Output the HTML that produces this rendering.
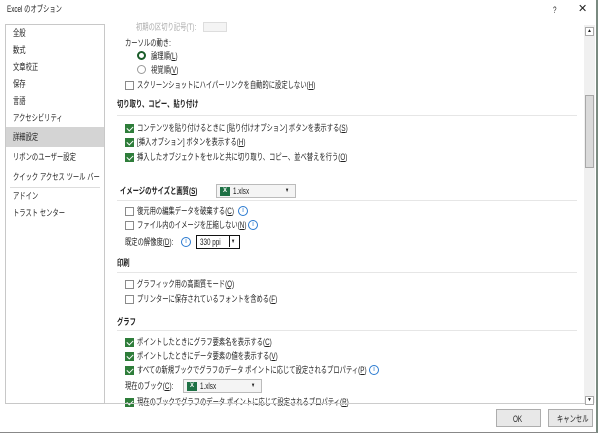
<!DOCTYPE html><html><head><meta charset="utf-8"><style>
*{margin:0;padding:0;box-sizing:border-box}
body{width:600px;height:433px;background:#fff;font-family:"Liberation Sans","Noto Sans CJK JP",sans-serif;font-size:9px;color:#222;position:relative;overflow:hidden}
.a{position:absolute;white-space:nowrap;line-height:12px;transform:scaleX(0.7);transform-origin:0 0}
.win{position:absolute;left:0;top:0;width:598px;height:433px;background:#fff;border-right:2px solid #7a8a80;border-bottom:1px solid #888}
.left{position:absolute;left:5px;top:24px;width:100px;height:380px;border:1px solid #c8c8c8;background:#fff}
.cb{position:absolute;width:9px;height:9px;border:1px solid #8a8a8a;background:#fff}
.cb.on{background:#2e7d3a;border-color:#2e7d3a}
.cb.on:after{content:"";position:absolute;left:2px;top:0px;width:3px;height:5px;border:solid #fff;border-width:0 1.5px 1.5px 0;transform:rotate(45deg)}
.hd{font-weight:bold}
.ln{position:absolute;left:117px;width:460px;height:1px;background:#e6e6e6}
.i{position:absolute;width:10px;height:10px;border:1px solid #2a7ad0;border-radius:50%;color:#2a7ad0;font-size:7px;text-align:center;line-height:8px;background:#fff}
.dd{position:absolute;height:14px;border:1px solid #bbb;background:#f4f4f4}
.xl{position:absolute;left:3px;top:2px;width:10px;height:9px;background:#1e7145;color:#fff;font-size:6px;line-height:9px;text-align:center;font-weight:bold}
.btn{position:absolute;top:409px;height:18px;width:45px;border:1px solid #adadad;background:#e8e8e8}
.btn .a{top:3px}
u{text-decoration:underline}
</style></head><body>
<div class="win"></div>
<div class="a" style="left:7px;top:3px">Excel のオプション</div>
<div class="a" style="left:553px;top:4px">?</div>
<div class="a" style="left:578px;top:3px;font-size:11px;transform:none">✕</div>
<div class="left"></div>
<div style="position:absolute;left:6px;top:127px;width:98px;height:20px;background:#d4d4d4"></div>
<div style="position:absolute;left:10px;top:187px;width:90px;height:1px;background:#ddd"></div>
<div class="a" style="left:13px;top:27px">全般</div>
<div class="a" style="left:13px;top:44px">数式</div>
<div class="a" style="left:13px;top:61px">文章校正</div>
<div class="a" style="left:13px;top:78px">保存</div>
<div class="a" style="left:13px;top:95px">言語</div>
<div class="a" style="left:13px;top:112px">アクセシビリティ</div>
<div class="a" style="left:13px;top:131px">詳細設定</div>
<div class="a" style="left:13px;top:151px">リボンのユーザー設定</div>
<div class="a" style="left:13px;top:171px">クイック アクセス ツール バー</div>
<div class="a" style="left:13px;top:190px">アドイン</div>
<div class="a" style="left:13px;top:207px">トラスト センター</div>
<div style="position:absolute;left:584px;top:25px;width:11px;height:378px;background:#f0f0f0"></div>
<div style="position:absolute;left:585px;top:27px;width:9px;height:9px;border:1px solid #aaa;background:#fff;font-size:5px;text-align:center;line-height:7px">▲</div>
<div style="position:absolute;left:585px;top:95px;width:9px;height:73px;border:1px solid #a8a8a8;background:#dadada"></div>
<div style="position:absolute;left:585px;top:396px;width:9px;height:9px;border:1px solid #aaa;background:#fff;font-size:5px;text-align:center;line-height:7px">▼</div>
<div class="a" style="left:136px;top:21px;color:#aaa">初期の区切り記号(T):</div>
<div style="position:absolute;left:203px;top:22px;width:24px;height:10px;border:1px solid #ddd;background:#f4f4f4"></div>
<div class="a" style="left:125px;top:37px">カーソルの動き:</div>
<div style="position:absolute;left:137px;top:51px;width:9px;height:9px;border:2.5px solid #1a5c2a;border-radius:50%"></div>
<div class="a" style="left:151px;top:50px">論理順(<u>L</u>)</div>
<div style="position:absolute;left:137px;top:65px;width:9px;height:9px;border:1px solid #999;border-radius:50%"></div>
<div class="a" style="left:151px;top:64px">視覚順(<u>V</u>)</div>
<div class="cb" style="left:125px;top:81px"></div><div class="a" style="left:137px;top:79px">スクリーンショットにハイパーリンクを自動的に設定しない(<u>H</u>)</div>
<div class="a hd" style="left:117px;top:98px">切り取り、コピー、貼り付け</div><div class="ln" style="top:115px"></div>
<div class="cb on" style="left:125px;top:124px"></div><div class="a" style="left:137px;top:122px">コンテンツを貼り付けるときに [貼り付けオプション] ボタンを表示する(<u>S</u>)</div>
<div class="cb on" style="left:125px;top:138px"></div><div class="a" style="left:137px;top:136px">[挿入オプション] ボタンを表示する(<u>H</u>)</div>
<div class="cb on" style="left:125px;top:153px"></div><div class="a" style="left:137px;top:151px">挿入したオブジェクトをセルと共に切り取り、コピー、並べ替えを行う(<u>O</u>)</div>
<div class="a hd" style="left:120px;top:185px">イメージのサイズと画質(<u>S</u>)</div>
<div class="dd" style="left:216px;top:184px;width:80px"><div class="xl">X</div><span class="a" style="left:16px;top:0px">1.xlsx</span><span class="a" style="left:68px;top:0;font-size:6px">▼</span></div>
<div class="ln" style="top:200px"></div>
<div class="cb" style="left:125px;top:207px"></div><div class="a" style="left:137px;top:205px">復元用の編集データを破棄する(<u>C</u>)</div><div class="i" style="left:238px;top:206px">i</div>
<div class="cb" style="left:125px;top:221px"></div><div class="a" style="left:137px;top:219px">ファイル内のイメージを圧縮しない(<u>N</u>)</div><div class="i" style="left:248px;top:220px">i</div>
<div class="a" style="left:125px;top:236px">既定の解像度(<u>D</u>):</div><div class="i" style="left:181px;top:237px">i</div>
<div style="position:absolute;left:196px;top:235px;width:44px;height:14px;border:1.5px solid #111;background:#fff"><span class="a" style="left:3px;top:0">330 ppi</span><span style="position:absolute;left:32px;top:0;width:1px;height:11px;background:#111"></span><span class="a" style="left:34px;top:0;font-size:6px">▼</span></div>
<div class="a hd" style="left:117px;top:257px">印刷</div><div class="ln" style="top:272px"></div>
<div class="cb" style="left:125px;top:280px"></div><div class="a" style="left:137px;top:278px">グラフィック用の高画質モード(<u>Q</u>)</div>
<div class="cb" style="left:125px;top:295px"></div><div class="a" style="left:137px;top:293px">プリンターに保存されているフォントを含める(<u>F</u>)</div>
<div class="a hd" style="left:117px;top:316px">グラフ</div><div class="ln" style="top:330px"></div>
<div class="cb on" style="left:125px;top:338px"></div><div class="a" style="left:137px;top:336px">ポイントしたときにグラフ要素名を表示する(<u>C</u>)</div>
<div class="cb on" style="left:125px;top:352px"></div><div class="a" style="left:137px;top:350px">ポイントしたときにデータ要素の値を表示する(<u>V</u>)</div>
<div class="cb on" style="left:125px;top:366px"></div><div class="a" style="left:137px;top:364px">すべての新規ブックでグラフのデータ ポイントに応じて設定されるプロパティ(<u>P</u>)</div><div class="i" style="left:369px;top:365px">i</div>
<div class="a" style="left:125px;top:380px">現在のブック(<u>C</u>):</div>
<div class="dd" style="left:183px;top:379px;width:79px"><div class="xl">X</div><span class="a" style="left:16px;top:0">1.xlsx</span><span class="a" style="left:67px;top:0;font-size:6px">▼</span></div>
<div class="cb on" style="left:125px;top:398px"></div><div class="a" style="left:137px;top:396px">現在のブックでグラフのデータ ポイントに応じて設定されるプロパティ(<u>R</u>)</div>
<div style="position:absolute;left:105px;top:403px;width:480px;height:1px;background:#ccc"></div>
<div class="btn" style="left:496px"><span class="a" style="left:16px">OK</span></div>
<div class="btn" style="left:548px"><span class="a" style="left:8px">キャンセル</span></div>
</body></html>
